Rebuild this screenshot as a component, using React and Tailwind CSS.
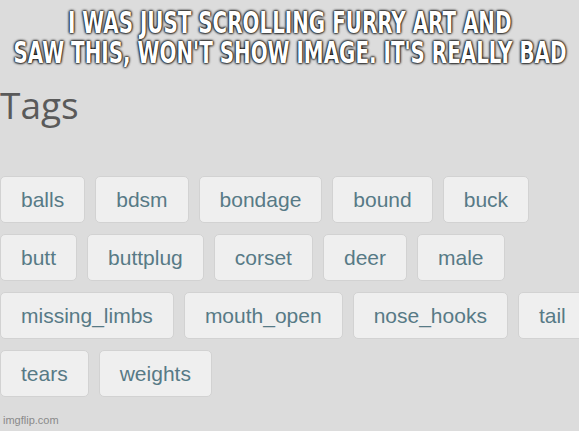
import React from 'react';

const tags = [
  'balls', 'bdsm', 'bondage', 'bound', 'buck',
  'butt', 'buttplug', 'corset', 'deer', 'male',
  'missing_limbs', 'mouth_open', 'nose_hooks', 'tail',
  'tears', 'weights',
];

const App = () => {
  return (
    <div className="relative w-[579px] h-[431px] overflow-hidden bg-[#dcdcdc]">
      <div className="pt-[8px] flex flex-col items-center text-white uppercase font-bold text-[28px] leading-[30px] whitespace-nowrap [font-family:'DejaVu_Sans_Condensed','Liberation_Sans',sans-serif] [text-shadow:0_0_3px_#000,0_0_3px_#000,0_0_2px_#000]">
        <p className="scale-x-[0.79] scale-y-[1.08]">I was just scrolling furry art and</p>
        <p className="scale-x-[0.79] scale-y-[1.08]">saw this, won't show image. It's really bad</p>
      </div>

      <h2 className="mt-[15px] text-[37px] leading-[44px] text-[#5a5a5a] [font-family:'Open_Sans','Liberation_Sans',sans-serif]">Tags</h2>

      <div className="mt-[49px] w-[600px] flex flex-wrap gap-x-[10px] gap-y-[11px]">
        {tags.map((tag) => (
          <span
            key={tag}
            className="h-[47px] flex items-center px-[20px] rounded-[5px] border border-[#d2d2d2] bg-[#efefef] text-[21px] text-[#577a86] [font-family:'Liberation_Sans',Arial,sans-serif]"
          >
            {tag}
          </span>
        ))}
      </div>

      <p className="absolute left-[3px] bottom-[3px] text-[11px] text-[#8a8a8a] [font-family:'Liberation_Sans',Arial,sans-serif]">imgflip.com</p>
    </div>
  );
};

export default App;
